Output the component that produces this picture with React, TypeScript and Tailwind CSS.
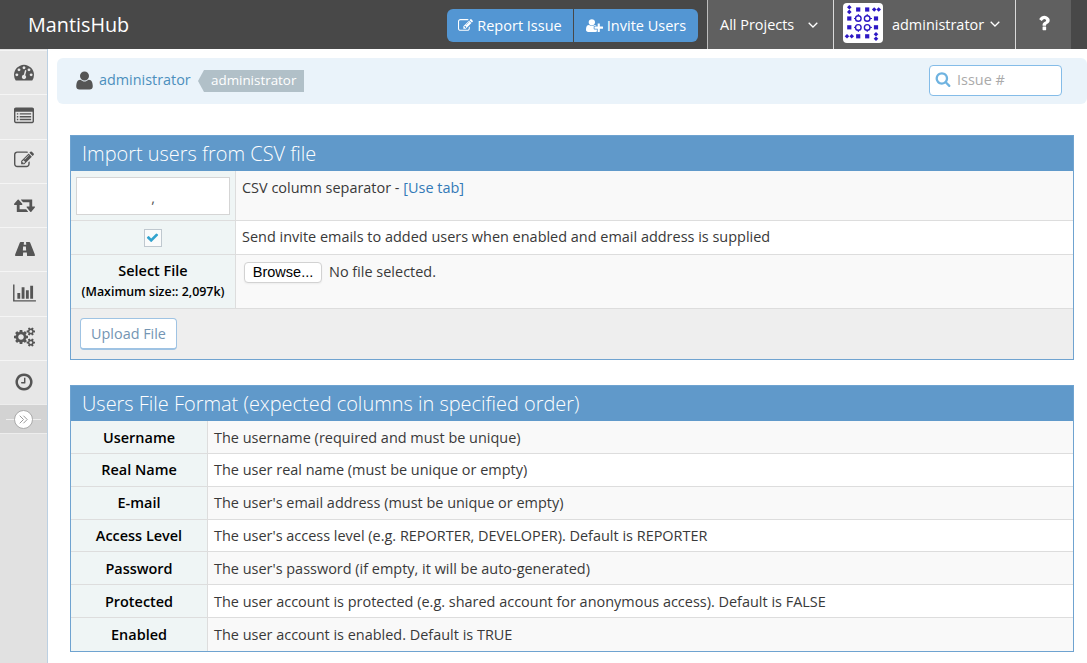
import type { ReactNode } from 'react';

const PENCIL = 'M888 1184l116-116-152-152-116 116v56h96v96h56zm440-720q-16-16-33 1l-350 350q-17 17-1 33t33-1l350-350q17-17 1-33zm80 594v190q0 119-84.5 203.5t-203.5 84.5h-832q-119 0-203.5-84.5t-84.5-203.5v-832q0-119 84.5-203.5t203.5-84.5h832q63 0 117 25 15 7 18 23 3 17-9 29l-49 49q-14 14-32 8-23-6-45-6h-832q-66 0-113 47t-47 113v832q0 66 47 113t113 47h832q66 0 113-47t47-113v-126q0-13 9-22l64-64q15-15 35-7t20 29zm-96-738l288 288-672 672h-288v-288zm444 132l-92 92-288-288 92-92q28-28 68-28t68 28l152 152q28 28 28 68t-28 68z';
const DASHBOARD = 'M384 1152q0-53-37.5-90.5t-90.5-37.5-90.5 37.5-37.5 90.5 37.5 90.5 90.5 37.5 90.5-37.5 37.5-90.5zm192-448q0-53-37.5-90.5t-90.5-37.5-90.5 37.5-37.5 90.5 37.5 90.5 90.5 37.5 90.5-37.5 37.5-90.5zm428 481l101-382q6-26-7.5-48.5t-38.5-29.5-48 6.5-30 39.5l-101 382q-60 5-107 43.5t-63 98.5q-20 77 20 146t117 89 146-20 89-117q16-60-6-117t-72-91zm660-33q0-53-37.5-90.5t-90.5-37.5-90.5 37.5-37.5 90.5 37.5 90.5 90.5 37.5 90.5-37.5 37.5-90.5zm-640-640q0-53-37.5-90.5t-90.5-37.5-90.5 37.5-37.5 90.5 37.5 90.5 90.5 37.5 90.5-37.5 37.5-90.5zm448 192q0-53-37.5-90.5t-90.5-37.5-90.5 37.5-37.5 90.5 37.5 90.5 90.5 37.5 90.5-37.5 37.5-90.5zm320 448q0 261-141 483-19 29-54 29h-1402q-35 0-54-29-141-221-141-483 0-182 71-348t191-286 286-191 348-71 348 71 286 191 191 286 71 348z';
const LIST = 'M256 1152h128v128h-128zM256 896h128v128h-128zM256 640h128v128h-128zM512 1152h1024v128h-1024zM512 896h1024v128h-1024zM512 640h1024v128h-1024zM1664 1376v-832q0-13-9.5-22.5t-22.5-9.5h-1472q-13 0-22.5 9.5t-9.5 22.5v832q0 13 9.5 22.5t22.5 9.5h1472q13 0 22.5-9.5t9.5-22.5zm128-1088v1088q0 66-47 113t-113 47h-1472q-66 0-113-47t-47-113v-1088q0-66 47-113t113-47h1472q66 0 113 47t47 113z';
const RETWEET = 'M1280 1504q0 13-9.5 22.5t-22.5 9.5h-960q-8 0-13.5-2t-9-7-5.5-8-3-11.5-1-11.5v-600h-192q-26 0-45-19t-19-45q0-24 15-41l320-384q19-22 49-22t49 22l320 384q15 17 15 41 0 26-19 45t-45 19h-192v384h576q16 0 25 11l160 192q7 10 7 21zm640-416q0 24-15 41l-320 384q-20 23-49 23t-49-23l-320-384q-15-17-15-41 0-26 19-45t45-19h192v-384h-576q-16 0-25-12l-160-192q-7-9-7-20 0-13 9.5-22.5t22.5-9.5h960q8 0 13.5 2t9 7 5.5 8 3 11.5 1 11.5v600h192q26 0 45 19t19 45z';
const ROAD = 'M1111 1012v-4l-24-320q-1-13-11-22.5t-23-9.5h-186q-13 0-23 9.5t-11 22.5l-24 320v4q-1 12 8 20t21 8h244q12 0 21-8t8-20zm804 451q0 73-46 73h-704q13 0 22-9.5t8-22.5l-20-256q-1-13-11-22.5t-23-9.5h-272q-13 0-23 9.5t-11 22.5l-20 256q-1 13 8 22.5t22 9.5h-704q-46 0-46-73 0-54 26-116l417-1044q8-19 26-33t38-14h339q-13 0-23 9.5t-11 22.5l-15 192q-1 14 8 23t22 9h166q13 0 22-9t8-23l-15-192q-1-13-11-22.5t-23-9.5h339q20 0 38 14t26 33l417 1044q26 62 26 116z';
const CHART = 'M640 896v512h-256v-512h256zm384-512v1024h-256v-1024h256zm1024 1152v128h-2048v-1536h128v1408h1920zm-640-896v768h-256v-768h256zm384-384v1152h-256v-1152h256z';
const SMALL_COG = 'v140q0 16-149 31-12 27-30 52 51 113 51 138 0 4-4 7-122 71-124 71-8 0-46-47t-52-68q-20 2-30 2t-30-2q-14 21-52 68t-46 47q-2 0-124-71-4-3-4-7 0-25 51-138-18-25-30-52-149-15-149-31v-140q0-16 149-31 13-29 30-52-51-113-51-138 0-4 4-7 4-2 35-20t59-34 30-16q8 0 46 46.5t52 67.5q20-2 30-2t30 2q51-71 92-112l6-2q4 0 124 70 4 3 4 7 0 25-51 138 17 23 30 52 149 15 149 31z';
const COGS = 'M896 896q0-106-75-181t-181-75-181 75-75 181 75 181 181 75 181-75 75-181zm768 512q0-52-38-90t-90-38-90 38-38 90q0 53 37.5 90.5t90.5 37.5 90.5-37.5 37.5-90.5zm0-1024q0-52-38-90t-90-38-90 38-38 90q0 53 37.5 90.5t90.5 37.5 90.5-37.5 37.5-90.5zm-384 421v185q0 10-7 19.5t-16 10.5l-155 24q-11 35-32 76 34 48 90 115 7 11 7 20 0 12-7 19-23 30-82.5 89.5t-78.5 59.5q-11 0-21-7l-115-90q-37 19-77 31-11 108-23 155-7 24-30 24h-186q-11 0-20-7.5t-10-17.5l-23-153q-34-10-75-31l-118 89q-7 7-20 7-11 0-21-8-144-133-144-160 0-9 7-19 10-14 41-53t47-61q-23-44-35-82l-152-24q-10-1-17-9.5t-7-19.5v-185q0-10 7-19.5t16-10.5l155-24q11-35 32-76-34-48-90-115-7-11-7-20 0-12 7-20 22-30 82-89t79-59q11 0 21 7l115 90q34-18 77-32 11-108 23-154 7-24 30-24h186q11 0 20 7.5t10 17.5l23 153q34 10 75 31l118-89q8-7 20-7 11 0 21 8 144 133 144 160 0 8-7 19-12 16-42 54t-45 60q23 48 34 82l152 23q10 2 17 10.5t7 19.5zm640 533' + SMALL_COG + 'm0-1024' + SMALL_COG;
const CLOCK = 'M1024 544v448q0 14-9 23t-23 9h-320q-14 0-23-9t-9-23v-64q0-14 9-23t23-9h224v-352q0-14 9-23t23-9h64q14 0 23 9t9 23zm416 352q0-148-73-273t-198-198-273-73-273 73-198 198-73 273 73 273 198 198 273 73 273-73 198-198 73-273zm224 0q0 209-103 385.5t-279.5 279.5-385.5 103-385.5-103-279.5-279.5-103-385.5 103-385.5 279.5-279.5 385.5-103 385.5 103 279.5 279.5 103 385.5z';
const USER = 'M1600 1405q0 120-73 189.5t-194 69.5h-874q-121 0-194-69.5t-73-189.5q0-53 3.5-103.5t14-109 26.5-108.5 43-97.5 62-81 85.5-53.5 111.5-20q9 0 42 21.5t74.5 48 108 48 133.5 21.5 133.5-21.5 108-48 74.5-48 42-21.5q61 0 111.5 20t85.5 53.5 62 81 43 97.5 26.5 108.5 14 109 3.5 103.5zm-320-893q0 159-112.5 271.5t-271.5 112.5-271.5-112.5-112.5-271.5 112.5-271.5 271.5-112.5 271.5 112.5 112.5 271.5z';
const USER_PLUS = 'M704 896q-159 0-271.5-112.5t-112.5-271.5 112.5-271.5 271.5-112.5 271.5 112.5 112.5 271.5-112.5 271.5-271.5 112.5zm960 128h352q13 0 22.5 9.5t9.5 22.5v192q0 13-9.5 22.5t-22.5 9.5h-352v352q0 13-9.5 22.5t-22.5 9.5h-192q-13 0-22.5-9.5t-9.5-22.5v-352h-352q-13 0-22.5-9.5t-9.5-22.5v-192q0-13 9.5-22.5t22.5-9.5h352v-352q0-13 9.5-22.5t22.5-9.5h192q13 0 22.5 9.5t9.5 22.5v352zm-736 224q0 52 38 90t90 38h256v238q-68 50-171 50h-874q-121 0-194-69t-73-190q0-53 3.5-103.5t14-109 26.5-108.5 43-97.5 62-81 85.5-53.5 111.5-20q19 0 39 17 79 61 154.5 91.5t164.5 30.5 164.5-30.5 154.5-91.5q20-17 39-17 132 0 217 96h-223q-52 0-90 38t-38 90v192z';
const SEARCH = 'M1216 832q0-185-131.5-316.5t-316.5-131.5-316.5 131.5-131.5 316.5 131.5 316.5 316.5 131.5 316.5-131.5 131.5-316.5zm512 832q0 52-38 90t-90 38q-54 0-90-38l-343-342q-179 124-399 124-143 0-273.5-55.5t-225-150-150-225-55.5-273.5 55.5-273.5 150-225 225-150 273.5-55.5 273.5 55.5 225 150 150 225 55.5 273.5q0 220-124 399l343 343q37 37 37 90z';
const QUESTION = 'M1088 1256v240q0 16-12 28t-28 12h-240q-16 0-28-12t-12-28v-240q0-16 12-28t28-12h240q16 0 28 12t12 28zm316-600q0 54-15.5 101t-35 76.5-55 59.5-57.5 43.5-61 35.5q-41 23-68.5 65t-27.5 67q0 17-12 32.5t-28 15.5h-240q-15 0-25.5-18.5t-10.5-37.5v-45q0-83 65-156.5t143-108.5q59-27 84-56t25-76q0-42-46.5-74t-107.5-32q-65 0-108 29-35 25-107 115-13 16-31 16-12 0-25-8l-164-125q-13-10-15.5-25t5.5-28q160-266 464-266 80 0 161 31t146 83 106 127.5 41 158.5z';
const CHECK = 'M1671 566q0 40-28 68l-724 724-136 136q-28 28-68 28t-68-28l-136-136-362-362q-28-28-28-68t28-68l136-136q28-28 68-28t68 28l294 295 656-657q28-28 68-28t68 28l136 136q28 28 28 68z';

function Icon({ d, w = 1792, className }: { d: string; w?: number; className: string }) {
  return (
    <svg viewBox={`0 0 ${w} 1792`} className={`shrink-0 fill-current ${className}`}>
      <path d={d} />
    </svg>
  );
}

function Chevron({ className }: { className: string }) {
  return (
    <svg viewBox="0 0 10 6" className={`h-1.5 w-2.5 shrink-0 ${className}`} fill="none" stroke="currentColor" strokeWidth="1.3">
      <path d="M.7.7 5 5 9.3.7" />
    </svg>
  );
}

function Avatar() {
  const squares = [[15.2, 6.5], [24.2, 6.5], [6.3, 15.5], [33, 15.5], [6.3, 24.3], [33, 24.3], [15.2, 33.3], [24.2, 33.3]];
  const rings = [[15.3, 15.5], [24.2, 15.5], [15.3, 24.4], [24.2, 24.4]];
  const dots = [[6.3, 4.2], [6.3, 8.9], [31.2, 6.5], [35.7, 6.5], [4, 33.3], [8.7, 33.3], [33, 31.2], [33, 35.7]];
  return (
    <svg viewBox="0 0 40 40" className="mb-[3px] size-10 shrink-0 rounded bg-white" fill="#2d18c4">
      {squares.map(([x, y]) => <rect key={`s${x}-${y}`} x={x - 2.1} y={y - 2.1} width="4.2" height="4.2" />)}
      {rings.map(([x, y]) => <circle key={`r${x}-${y}`} cx={x} cy={y} r="2.8" fill="none" stroke="#2d18c4" strokeWidth="1.4" />)}
      {dots.map(([x, y]) => <path key={`d${x}-${y}`} d={`M${x - 2.3} ${y}l2.3-2.3 2.3 2.3-2.3 2.3z`} />)}
      <path d="M11 15.5h2M27 15.5h2M11 24.4h2M27 24.4h2M15.3 11v2M24.2 11v2M15.3 27v2M24.2 27v2" stroke="#2d18c4" />
    </svg>
  );
}

const nav = [
  { d: DASHBOARD, w: 1792, cls: 'h-5 w-5' },
  { d: LIST, w: 1792, cls: 'h-5 w-5' },
  { d: PENCIL, w: 1792, cls: 'h-5 w-5' },
  { d: RETWEET, w: 1920, cls: 'h-5 w-[21px]' },
  { d: ROAD, w: 1920, cls: 'h-5 w-[21px]' },
  { d: CHART, w: 2048, cls: 'h-5 w-[23px]' },
  { d: COGS, w: 1920, cls: 'h-5 w-[21px]' },
  { d: CLOCK, w: 1792, cls: 'h-5 w-5' },
];

const columns = [
  ['Username', 'The username (required and must be unique)'],
  ['Real Name', 'The user real name (must be unique or empty)'],
  ['E-mail', "The user's email address (must be unique or empty)"],
  ['Access Level', "The user's access level (e.g. REPORTER, DEVELOPER). Default is REPORTER"],
  ['Password', "The user's password (if empty, it will be auto-generated)"],
  ['Protected', 'The user account is protected (e.g. shared account for anonymous access). Default is FALSE'],
  ['Enabled', 'The user account is enabled. Default is TRUE'],
];

function Panel({ title, className, children }: { title: string; className: string; children: ReactNode }) {
  return (
    <section className={`ml-[22px] w-[1004px] border border-[#6fa3d0] ${className}`}>
      <h2 className="flex h-[35px] items-center bg-[#6099ca] pl-[11px] text-[19.95px] font-light whitespace-nowrap text-white">{title}</h2>
      {children}
    </section>
  );
}

export default function App() {
  return (
    <div className="flex h-[663px] w-[1087px] flex-col overflow-hidden bg-white font-['Open_Sans','Noto_Sans',sans-serif] text-[14.46px] text-[#393939]">
      <header className="flex h-[49px] shrink-0 bg-[#484848] text-white">
        <h1 className="ml-7 flex flex-1 items-center text-[19.8px] whitespace-nowrap">MantisHub</h1>
        <div className="mt-[9px] mr-[9px] flex h-[33px] gap-px text-[14.5px] whitespace-nowrap">
          <button className="flex w-[126px] items-center justify-center gap-1 rounded-l-md bg-[#5396d3]">
            <Icon d={PENCIL} className="size-[15px]" />Report Issue
          </button>
          <button className="flex w-[124px] items-center justify-center gap-1 rounded-r-md bg-[#5396d3]">
            <Icon d={USER_PLUS} w={2048} className="h-[15px] w-[17px]" />Invite Users
          </button>
        </div>
        <div className="flex w-[126px] items-center border-l border-[#bdbdbd] bg-[#606060] pl-3 whitespace-nowrap">
          All Projects<Chevron className="ml-3.5" />
        </div>
        <div className="flex w-[182px] items-center border-l border-[#dadada] bg-[#606060] pl-[9px] whitespace-nowrap">
          <Avatar /><span className="ml-[9px]">administrator</span><Chevron className="mb-0.5 ml-1.5" />
        </div>
        <div className="flex w-14 items-center justify-center border-l border-[#dadada] bg-[#606060]">
          <Icon d={QUESTION} className="mb-1 size-5" />
        </div>
        <div className="w-4" />
      </header>

      <div className="flex min-h-0 flex-1">
        <nav className="flex w-12 shrink-0 flex-col border-r border-[#bcd0e2] bg-[#e1e1e1] pt-px">
          {nav.map((item, i) => (
            <a key={i} className="flex h-[44.3px] shrink-0 items-center justify-center border-t border-[#f5f5f5] bg-[#e7e7e7] pb-0.5 pl-px text-[#555]">
              <Icon d={item.d} w={item.w} className={item.cls} />
            </a>
          ))}
          <div className="flex h-[30px] items-center justify-center border-y border-[#ededed] bg-[#d3d3d3]">
            <span className="h-px w-2 bg-[#eee]" />
            <span className="flex size-[19px] items-center justify-center rounded-full border border-[#aaa] bg-white text-[#999]">
              <svg viewBox="0 0 9 9" className="size-[9px]" fill="none" stroke="currentColor">
                <path d="m.7.7 3.8 3.8L.7 8.3M4.4.7l3.8 3.8-3.8 3.8" />
              </svg>
            </span>
            <span className="h-px w-2 bg-[#eee]" />
          </div>
        </nav>

        <main className="min-w-0 flex-1 pt-[9px]">
          <div className="ml-[9px] flex h-[46px] items-center rounded-md bg-[#eaf3fa] pr-[25px] pb-0.5 pl-[17px]">
            <Icon d={USER} className="size-[21px] text-[#555]" />
            <a className="ml-1 w-[91px] text-[14.4px] text-[#4c8fbd]">administrator</a>
            <svg viewBox="0 0 6 22" className="mt-0.5 ml-2 h-[22px] w-1.5 fill-[#b1c0c8]"><path d="M6 0v22L0 11z" /></svg>
            <span className="mt-0.5 flex h-[22px] w-[100px] items-center bg-[#b1c0c8] pb-px pl-[7px] text-[13.4px] text-white">administrator</span>
            <label className="ml-auto flex h-[31px] w-[133px] items-center rounded border border-[#84bce8] bg-white pl-[5px] text-[#aaa]">
              <Icon d={SEARCH} className="mb-0.5 size-4 text-[#6fb3e0]" />
              <span className="ml-1.5">Issue #</span>
            </label>
          </div>

          <Panel title="Import users from CSV file" className="mt-[31px] h-[225px]">
            <div className="grid grid-cols-[165px_1fr] grid-rows-[50px_34px_54px]">
              <div className="border-r border-b border-[#ddd] bg-[#eff5f5] px-[5px] pt-1.5">
                <div className="flex h-[38px] items-center justify-center border border-[#d5d5d5] bg-white pt-1 text-[#555]">,</div>
              </div>
              <div className="border-b border-[#ddd] bg-[#f9f9f9] pt-1.5 pl-1.5">
                CSV column separator - <a className="text-[#337ab7]">[Use tab]</a>
              </div>
              <div className="flex items-center justify-center border-r border-b border-[#ddd] bg-[#eff5f5] pr-px">
                <span className="flex size-[18px] items-center justify-center border border-[#bfc8cf] bg-[#fafbfb]">
                  <Icon d={CHECK} className="size-[13px] text-[#32a3ce]" />
                </span>
              </div>
              <div className="flex items-center border-b border-[#ddd] pb-px pl-1.5">
                Send invite emails to added users when enabled and email address is supplied
              </div>
              <div className="border-r border-b border-[#ddd] bg-[#eff5f5] pt-[5px] text-center leading-[21px] font-semibold whitespace-nowrap text-black">
                <div>Select File</div>
                <div className="text-[12.4px]">(Maximum size:: 2,097k)</div>
              </div>
              <div className="flex items-start border-b border-[#ddd] bg-[#f9f9f9] pt-[6px] pl-2">
                <button className="mt-px flex h-[21px] w-[78px] items-center justify-center rounded border border-[#d2d2d2] bg-white font-['Liberation_Sans',sans-serif] text-[14.5px] text-black shadow-xs">Browse...</button>
                <span className="ml-[7px] leading-[21px]">No file selected.</span>
              </div>
            </div>
            <div className="h-[50px] bg-[#eee] pt-[9px] pl-[9px]">
              <button className="flex h-8 w-[97px] items-center justify-center rounded border border-b-2 border-[#9fc3e3] bg-white text-[14.4px] text-[#7495b3]">Upload File</button>
            </div>
          </Panel>

          <Panel title="Users File Format (expected columns in specified order)" className="mt-[25px] h-[267px]">
            {columns.map(([name, text], i) => (
              <div key={name} className={`flex h-[32.85px] border-b border-[#ddd] last:border-b-0 ${i % 2 ? 'bg-white' : 'bg-[#f9f9f9]'}`}>
                <div className="flex w-[137px] items-center justify-center border-r border-[#ddd] bg-[#eff5f5] pt-px font-semibold text-black">{name}</div>
                <div className="flex items-center pt-px pl-1.5">{text}</div>
              </div>
            ))}
          </Panel>
        </main>
      </div>
    </div>
  );
}
